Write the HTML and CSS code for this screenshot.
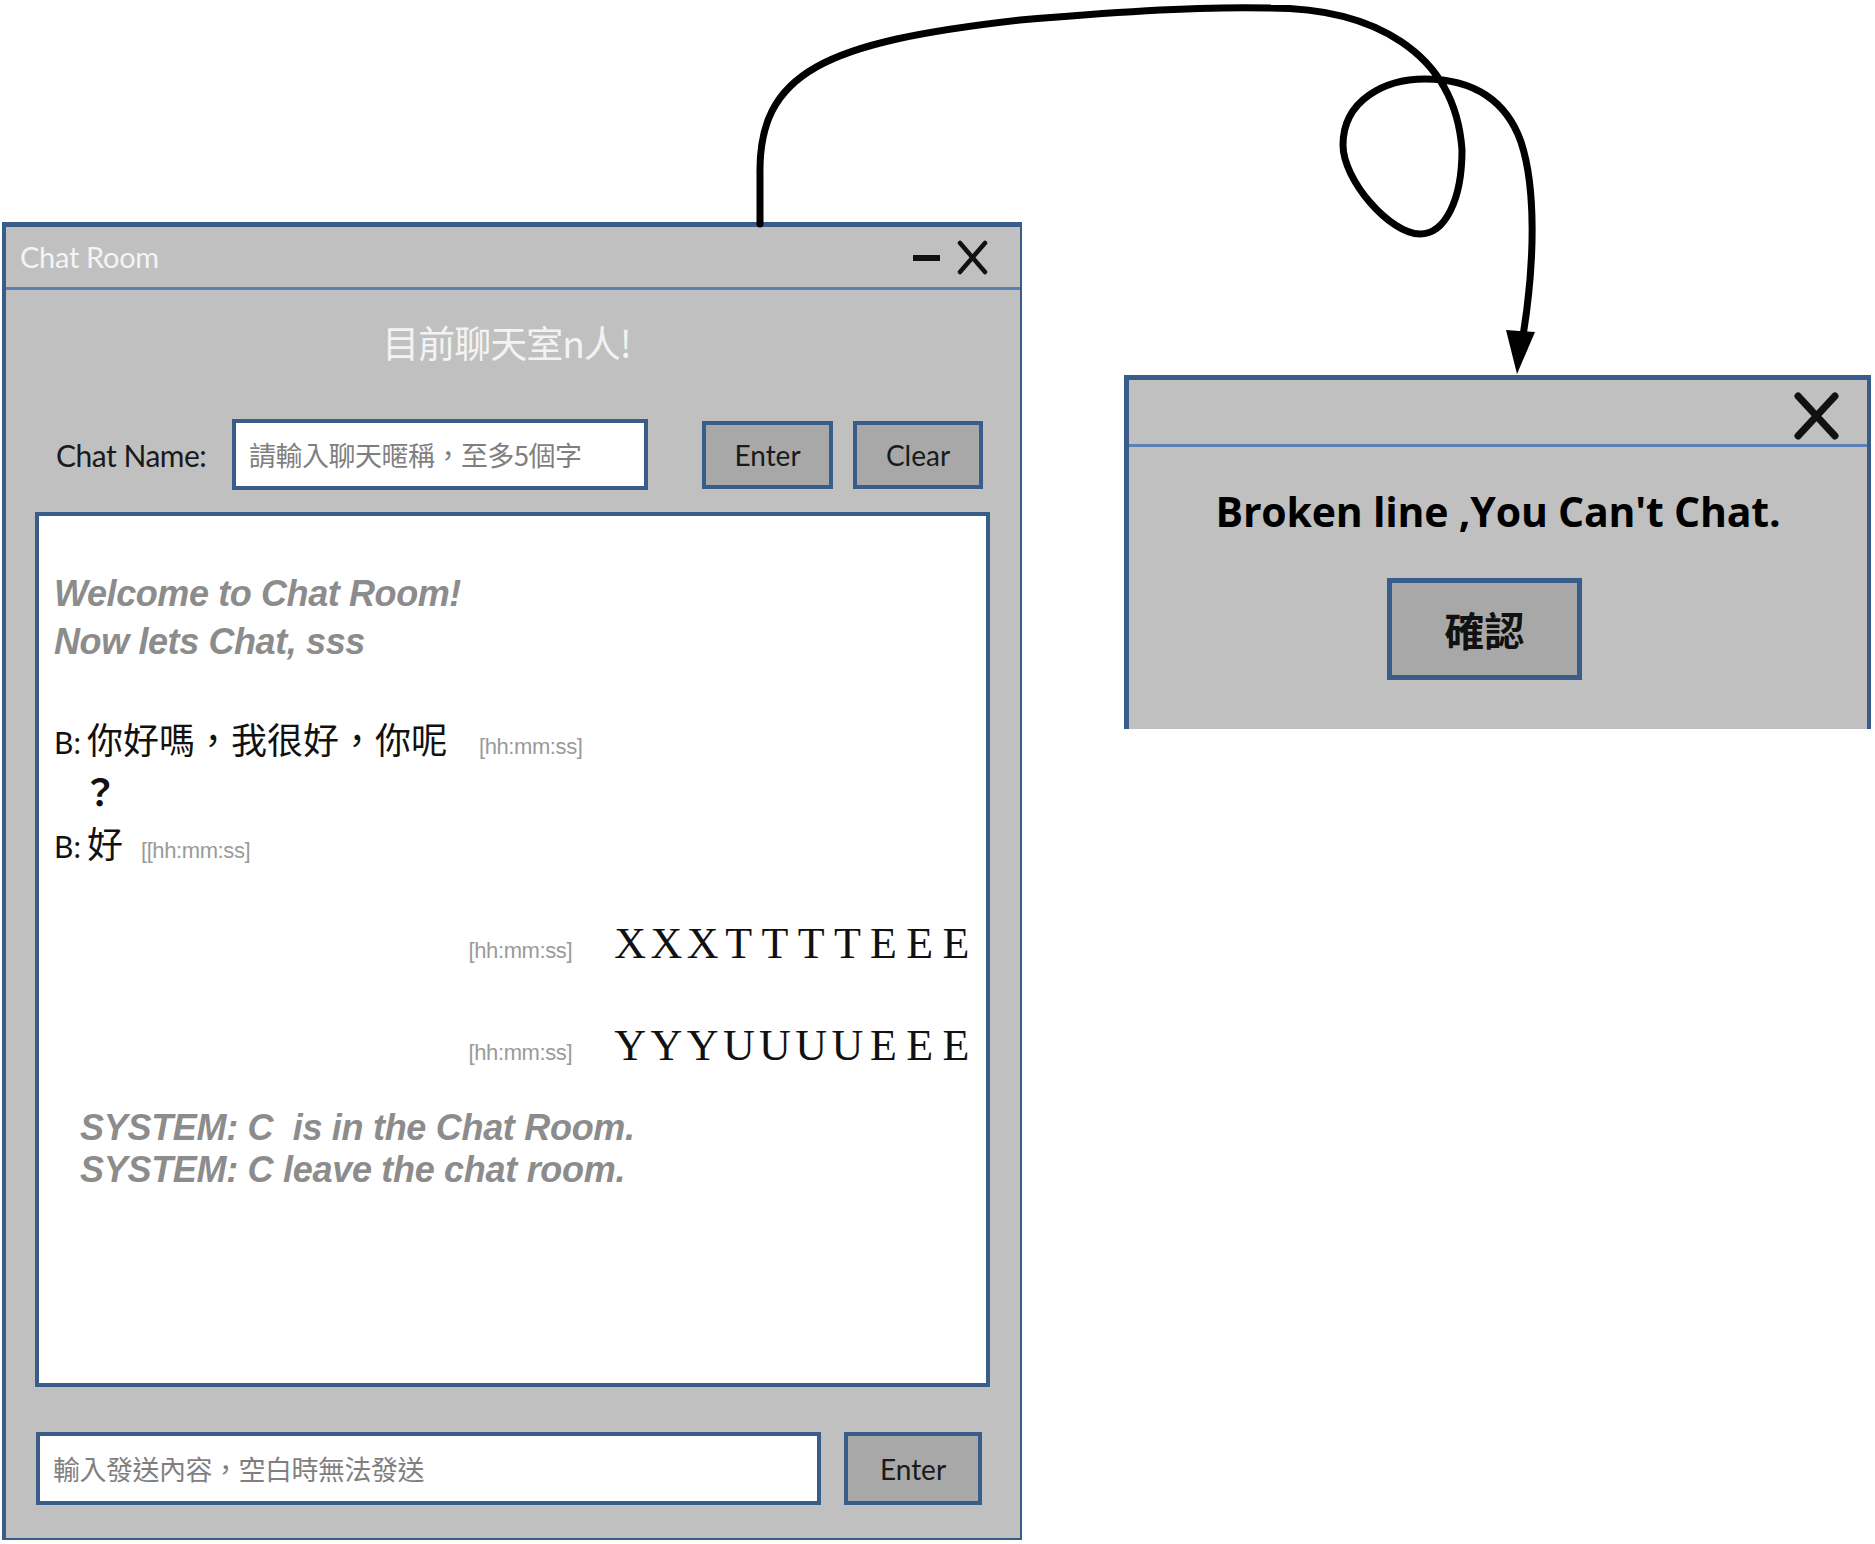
FILE: index.html
```html
<!DOCTYPE html>
<html lang="zh-Hant">
<head>
<meta charset="utf-8">
<title>Chat Room</title>
<link rel="stylesheet" href="styles.css">
</head>
<body>
<div class="canvas">
  <section class="window main-window">
    <header class="titlebar">
      <span class="title">Chat Room</span>
      <div class="controls">
        <span class="ctl-min"></span>
        <svg class="ctl-close" viewBox="0 0 31 35" width="31" height="35"><path d="M3 3 L28 32 M28 3 L3 32"/></svg>
      </div>
    </header>
    <div class="win-body">
      <div class="count">目前聊天室n人!</div>
      <div class="name-row">
        <span class="name-label">Chat Name:</span>
        <div class="field name-field"><span class="placeholder">請輸入聊天暱稱，至多5個字</span></div>
        <button class="btn btn-enter">Enter</button>
        <button class="btn btn-clear">Clear</button>
      </div>
      <div class="log">
        <p class="welcome">Welcome to Chat Room!<br>Now lets Chat, sss</p>
        <div class="msg msg-first"><span class="who">B:</span><span class="text">你好嗎，我很好，你呢</span><span class="time time-wide">[hh:mm:ss]</span></div>
        <div class="msg msg-cont"><span class="text">？</span></div>
        <div class="msg"><span class="who">B:</span><span class="text">好</span><span class="time">[[hh:mm:ss]</span></div>
        <div class="msg-out out-first"><span class="time">[hh:mm:ss]</span><span class="mono"><span class="cell">X</span><span class="cell">X</span><span class="cell">X</span><span class="cell">T</span><span class="cell">T</span><span class="cell">T</span><span class="cell">T</span><span class="cell">E</span><span class="cell">E</span><span class="cell">E</span></span></div>
        <div class="msg-out out-second"><span class="time">[hh:mm:ss]</span><span class="mono"><span class="cell">Y</span><span class="cell">Y</span><span class="cell">Y</span><span class="cell">U</span><span class="cell">U</span><span class="cell">U</span><span class="cell">U</span><span class="cell">E</span><span class="cell">E</span><span class="cell">E</span></span></div>
        <p class="system">SYSTEM: C&nbsp; is in the Chat Room.<br>SYSTEM: C leave the chat room.</p>
      </div>
      <div class="send-row">
        <div class="field send-field"><span class="placeholder">輸入發送內容，空白時無法發送</span></div>
        <button class="btn btn-send">Enter</button>
      </div>
    </div>
  </section>

  <section class="window dialog">
    <header class="titlebar dialog-titlebar">
      <svg class="dlg-close" viewBox="0 0 47 50" width="47" height="50"><path d="M5 5 L42 45 M42 5 L5 45"/></svg>
    </header>
    <p class="dlg-message">Broken line ,You Can't Chat.</p>
    <div class="dlg-actions">
      <button class="btn dlg-btn">確認</button>
    </div>
  </section>
</div>

<svg class="connector" viewBox="0 0 1875 1544" width="1875" height="1544">
  <path class="connector-line" d="M760 224 L760 175 C758 72 825 42 1020 20 C1100 13 1200 6 1270 8 C1370 8 1455 50 1462 150 C1462 200 1445 234 1420 234 C1390 234 1343 180 1343 145 C1343 100 1385 79 1425 79 C1475 79 1507 102 1521 142 C1536 187 1535 262 1523 336"/>
  <polygon class="connector-head" points="1506,330 1535,332 1517,374"/>
</svg>
</body>
</html>
```

FILE: styles.css
```css
* {
  box-sizing: border-box;
  margin: 0;
  padding: 0;
}

html, body {
  background: #ffffff;
}

body {
  position: relative;
  width: 1875px;
  height: 1544px;
  overflow: hidden;
  font-family: "Lato", "Noto Sans CJK TC", sans-serif;
  color: #111;
}

.canvas {
  display: flex;
  align-items: flex-start;
}

.window {
  background: #c0c0c0;
  border-style: solid;
  border-color: #385d8a;
}

.main-window {
  margin-top: 222px;
  margin-left: 2px;
  width: 1020px;
  border-width: 5px 2px 2px 4px;
}

.titlebar {
  height: 63px;
  display: flex;
  align-items: center;
  justify-content: space-between;
  padding: 0 32px 0 14px;
  border-bottom: 3px solid #5b80b6;
}

.title {
  font-family: "Lato", sans-serif;
  font-size: 29px;
  color: #f4f4f4;
  letter-spacing: -0.3px;
  margin-top: -2px;
}

.controls {
  display: flex;
  align-items: center;
  gap: 17px;
}

.ctl-min {
  display: block;
  width: 27px;
  height: 6px;
  background: #111;
  margin-top: 2px;
}

.ctl-close path,
.dlg-close path {
  stroke: #111;
  fill: none;
  stroke-linecap: round;
}

.ctl-close path {
  stroke-width: 4.5;
}

.dlg-close path {
  stroke-width: 7;
}

.win-body {
  padding: 0 30px 33px 29px;
}

.count {
  margin-top: 26px;
  height: 52px;
  line-height: 52px;
  text-align: center;
  padding-right: 12px;
  font-family: "Noto Sans CJK TC", sans-serif;
  font-size: 37px;
  letter-spacing: -1px;
  color: #f3f3f3;
}

.name-row {
  margin-top: 51px;
  height: 71px;
  display: flex;
  align-items: center;
}

.name-label {
  flex: none;
  width: 197px;
  padding-left: 21px;
  font-size: 30px;
  color: #1a1a1a;
  letter-spacing: -0.5px;
}

.field {
  flex: none;
  background: #ffffff;
  border: 4px solid #385d8a;
  display: flex;
  align-items: center;
}

.placeholder {
  font-family: "Noto Sans CJK TC", sans-serif;
  font-size: 27px;
  color: #7f7f7f;
  letter-spacing: -0.5px;
}

.name-field {
  width: 416px;
  height: 71px;
  padding-left: 13px;
}

.btn {
  flex: none;
  background: #a8a8a8;
  border: 4px solid #385d8a;
  font-family: "Lato", "Noto Sans CJK TC", sans-serif;
  font-size: 28px;
  color: #1a1a1a;
  display: flex;
  align-items: center;
  justify-content: center;
}

.btn-enter {
  margin-left: 54px;
  width: 131px;
  height: 68px;
}

.btn-clear {
  margin-left: 20px;
  width: 130px;
  height: 68px;
}

.log {
  margin-top: 22px;
  height: 875px;
  background: #ffffff;
  border: 4px solid #385d8a;
  padding: 54px 10px 0 15px;
}

.welcome,
.system {
  font-family: "Liberation Sans", Arial, sans-serif;
  font-weight: bold;
  font-style: italic;
  font-size: 36px;
  color: #8c8c8c;
}

.welcome {
  line-height: 48px;
  letter-spacing: -0.4px;
}

.msg {
  height: 52px;
  line-height: 52px;
  white-space: nowrap;
}

.msg-first {
  margin-top: 46px;
}

.who {
  font-family: "Lato", sans-serif;
  font-size: 30px;
  color: #111;
  margin-right: 6px;
}

.text {
  font-family: "Noto Sans CJK TC", sans-serif;
  font-size: 36px;
  color: #111;
}

.msg-cont {
  padding-left: 28px;
}

.msg-cont .text {
  font-weight: 700;
}

.time {
  font-family: "Liberation Sans", Arial, sans-serif;
  font-size: 22px;
  color: #9a9a9a;
  margin-left: 18px;
  letter-spacing: -0.4px;
}

.time-wide {
  margin-left: 32px;
}

.msg-out {
  display: flex;
  justify-content: flex-end;
  align-items: baseline;
  height: 60px;
  line-height: 60px;
}

.msg-out .time {
  margin-left: 0;
}

.out-first {
  margin-top: 46px;
}

.out-second {
  margin-top: 42px;
}

.mono {
  display: flex;
  margin-left: 40px;
  margin-right: 2px;
  font-family: "Liberation Serif", "Times New Roman", serif;
  font-size: 44px;
  color: #111;
}

.cell {
  display: inline-block;
  width: 36.2px;
  text-align: center;
}

.system {
  margin-top: 31px;
  padding-left: 26px;
  line-height: 42px;
  letter-spacing: -0.3px;
}

.send-row {
  margin-top: 45px;
  height: 73px;
  display: flex;
}

.send-field {
  margin-left: 1px;
  width: 785px;
  height: 73px;
  padding-left: 13px;
}

.btn-send {
  margin-left: 23px;
  width: 138px;
  height: 73px;
}

.dialog {
  margin-top: 375px;
  margin-left: 102px;
  width: 747px;
  height: 354px;
  border-width: 5px 4px 0 5px;
}

.dialog-titlebar {
  height: 67px;
  justify-content: flex-end;
  padding: 0 27px 0 0;
}

.dlg-close {
  margin-top: 8px;
}

.dlg-message {
  margin-top: 39px;
  line-height: 50px;
  text-align: center;
  font-family: "Open Sans", "Lato", sans-serif;
  font-weight: bold;
  font-size: 41px;
  color: #000;
  letter-spacing: -0.2px;
}

.dlg-actions {
  margin-top: 42px;
  display: flex;
  justify-content: center;
  padding-right: 27px;
}

.dlg-btn {
  width: 195px;
  height: 102px;
  border-width: 5px;
  font-family: "Noto Sans CJK TC", sans-serif;
  font-weight: bold;
  font-size: 40px;
  color: #111;
}

.connector {
  position: absolute;
  top: 0;
  left: 0;
  pointer-events: none;
}

.connector-line {
  fill: none;
  stroke: #000;
  stroke-width: 7;
  stroke-linecap: round;
  stroke-linejoin: round;
}

.connector-head {
  fill: #000;
}
```
